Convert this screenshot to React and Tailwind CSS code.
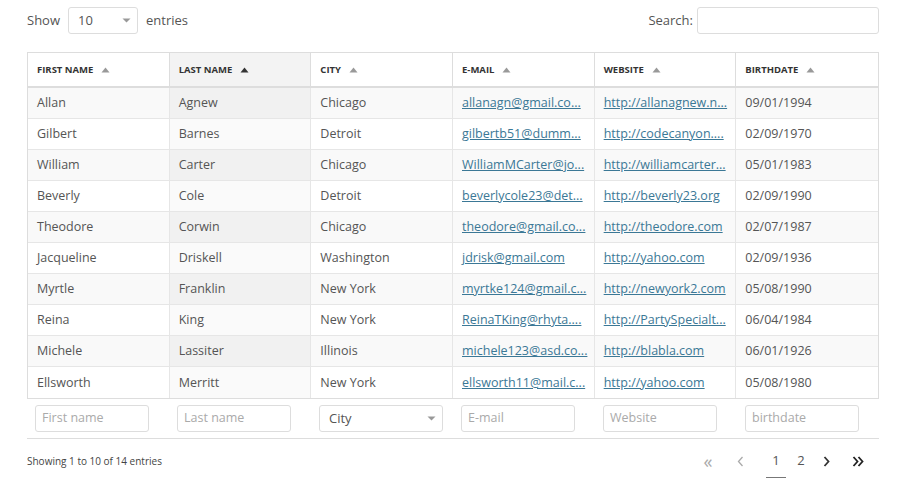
import React from "react";

const rows = [
  ["Allan", "Agnew", "Chicago", "allanagn@gmail.co...", "http://allanagnew.n...", "09/01/1994"],
  ["Gilbert", "Barnes", "Detroit", "gilbertb51@dumm...", "http://codecanyon....", "02/09/1970"],
  ["William", "Carter", "Chicago", "WilliamMCarter@jo...", "http://williamcarter...", "05/01/1983"],
  ["Beverly", "Cole", "Detroit", "beverlycole23@det...", "http://beverly23.org", "02/09/1990"],
  ["Theodore", "Corwin", "Chicago", "theodore@gmail.co...", "http://theodore.com", "02/07/1987"],
  ["Jacqueline", "Driskell", "Washington", "jdrisk@gmail.com", "http://yahoo.com", "02/09/1936"],
  ["Myrtle", "Franklin", "New York", "myrtke124@gmail.c...", "http://newyork2.com", "05/08/1990"],
  ["Reina", "King", "New York", "ReinaTKing@rhyta....", "http://PartySpecialt...", "06/04/1984"],
  ["Michele", "Lassiter", "Illinois", "michele123@asd.co...", "http://blabla.com", "06/01/1926"],
  ["Ellsworth", "Merritt", "New York", "ellsworth11@mail.c...", "http://yahoo.com", "05/08/1980"],
];

const heads = ["FIRST NAME", "LAST NAME", "CITY", "E-MAIL", "WEBSITE", "BIRTHDATE"];
const filters = ["First name", "Last name", "City", "E-mail", "Website", "birthdate"];

function Caret({ dark }) {
  return (
    <svg width="9" height="6" viewBox="0 0 9 6" className="ml-[8px]">
      <path d="M0.5 5.5 L4.5 0.5 L8.5 5.5 Z" fill={dark ? "#333" : "#999"} />
    </svg>
  );
}

function Down() {
  return (
    <svg width="9" height="5" viewBox="0 0 9 5">
      <path d="M0.5 0.5 L4.5 4.5 L8.5 0.5 Z" fill="#999" />
    </svg>
  );
}

export default function App() {
  return (
    <div className="w-[900px] h-[484px] bg-white text-[#555] overflow-hidden" style={{ fontFamily: '"Open Sans", sans-serif' }}>
      <div className="pl-[27px] pt-[7px]">
        <div className="flex items-center justify-between h-[27px] w-[852px]">
          <div className="flex items-center text-[13px]">
            <span>Show</span>
            <div className="ml-[8px] w-[70px] h-[27px] border border-[#ddd] rounded-[3px] flex items-center justify-between pl-[9px] pr-[6px] text-[#555]">
              <span>10</span>
              <Down />
            </div>
            <span className="ml-[8px]">entries</span>
          </div>
          <div className="flex items-center text-[13px]">
            <span className="mr-[4px]">Search:</span>
            <div className="w-[182px] h-[27px] border border-[#ddd] rounded-[3px]" />
          </div>
        </div>

        <div className="mt-[18px] w-[852px]">
          <div className="border border-[#ddd]">
            <div className="grid grid-cols-6 h-[35px] border-b-2 border-[#ddd]">
              {heads.map((h, i) => (
                <div
                  key={h}
                  className={`flex items-center pl-[9px] pt-[1px] text-[9.5px] font-bold text-[#333] ${i < 5 ? "border-r border-[#ddd]" : ""} ${i === 1 ? "bg-[#f3f3f3]" : ""}`}
                >
                  {h}
                  <Caret dark={i === 1} />
                </div>
              ))}
            </div>
            {rows.map((r, ri) => (
              <div key={ri} className={`grid grid-cols-6 h-[31px] ${ri < 9 ? "border-b border-[#e6e6e6]" : ""} ${ri % 2 === 0 ? "bg-[#f9f9f9]" : "bg-white"}`}>
                {r.map((c, ci) => (
                  <div
                    key={ci}
                    className={`flex items-center pl-[9px] pt-[1px] text-[12.5px] whitespace-nowrap overflow-hidden ${ci < 5 ? "border-r border-[#e6e6e6]" : ""} ${ci === 1 ? (ri % 2 === 0 ? "bg-[#f1f1f1]" : "bg-[#fafafa]") : ""}`}
                  >
                    {ci === 3 || ci === 4 ? (
                      <span className="underline text-[#3b7896]">{c}</span>
                    ) : (
                      <span>{c}</span>
                    )}
                  </div>
                ))}
              </div>
            ))}
          </div>
          <div className="grid grid-cols-6 h-[40px] border-b border-[#ddd] items-center">
            {filters.map((f, i) => (
              <div key={f} className="pl-[8px]">
                {i === 2 ? (
                  <div className="w-[124px] h-[27px] border border-[#ddd] rounded-[3px] flex items-center justify-between pl-[9px] pr-[6px] text-[13px] text-[#555]">
                    <span>City</span>
                    <Down />
                  </div>
                ) : (
                  <div className="w-[114px] h-[27px] border border-[#ddd] rounded-[3px] flex items-center pl-[6px] text-[12.5px] text-[#aaa]">
                    {f}
                  </div>
                )}
              </div>
            ))}
          </div>
          <div className="flex items-center justify-between h-[44px]">
            <span className="text-[10px] text-[#444] mt-[1px]">Showing 1 to 10 of 14 entries</span>
            <div className="flex items-center text-[13px] text-[#555] mr-[11px]">
              <span className="text-[#aaa] text-[18px] leading-none w-[20px] text-center">«</span>
              <span className="ml-[12px] w-[20px] text-center">
                <svg width="7" height="11" viewBox="0 0 7 11" className="inline"><path d="M5.5 1 L1.5 5.5 L5.5 10" fill="none" stroke="#aaa" strokeWidth="1.3" /></svg>
              </span>
              <span className="ml-[16px] w-[20px] text-center relative">
                1
                <span className="absolute left-0 right-0 -bottom-[7px] h-px bg-[#777]" />
              </span>
              <span className="ml-[5px] w-[20px] text-center">2</span>
              <span className="ml-[5px] w-[20px] text-center">
                <svg width="7" height="11" viewBox="0 0 7 11" className="inline"><path d="M1.5 1 L5.5 5.5 L1.5 10" fill="none" stroke="#333" strokeWidth="1.8" /></svg>
              </span>
              <span className="ml-[12px] w-[20px] text-center">
                <svg width="12" height="11" viewBox="0 0 12 11" className="inline"><path d="M1.5 1 L5.5 5.5 L1.5 10 M6.5 1 L10.5 5.5 L6.5 10" fill="none" stroke="#222" strokeWidth="1.8" /></svg>
              </span>
            </div>
          </div>
        </div>
      </div>
    </div>
  );
}
